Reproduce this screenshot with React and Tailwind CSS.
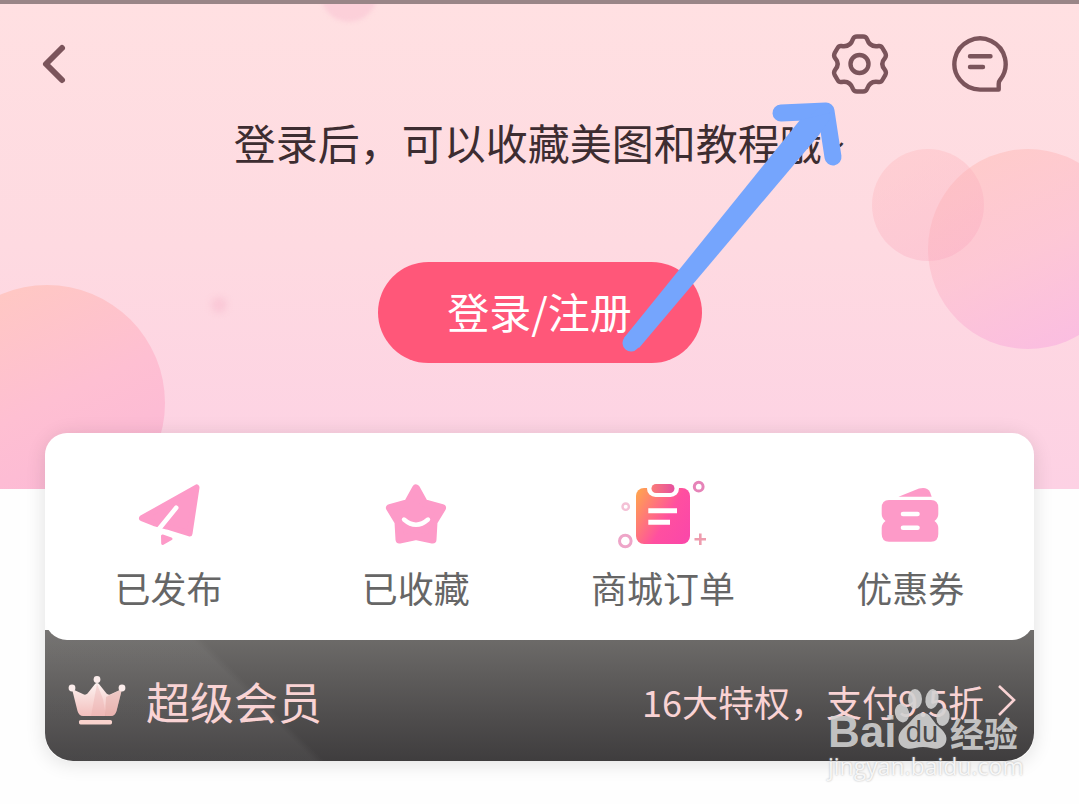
const BackIcon = () => (
  <svg className="w-[60px] h-[60px]" viewBox="0 0 60 60" fill="none" stroke="#7b545b" strokeWidth="6" strokeLinecap="round" strokeLinejoin="round">
    <path d="M38 14L22 30L38 46" />
  </svg>
);

const SettingsIcon = () => (
  <svg className="w-[60px] h-[60px]" viewBox="0 0 60 60" fill="none" stroke="#7b545b" strokeWidth="4.4" strokeLinejoin="round">
    <path d="M27 2.5H33Q36 2.5 37 5C39 11 43 13 48.5 12Q51 11.5 52.4 14L55.4 19.2Q56.6 21.5 55 24C51.4 28 51.4 32 55 36Q56.6 38.5 55.4 40.8L52.4 46Q51 48.5 48.5 48C43 47 39 49 37 55Q36 57.5 33 57.5H27Q24 57.5 23 55C21 49 17 47 11.5 48Q9 48.5 7.6 46L4.6 40.8Q3.4 38.5 5 36C8.6 32 8.6 28 5 24Q3.4 21.5 4.6 19.2L7.6 14Q9 11.5 11.5 12C17 13 21 11 23 5Q24 2.5 27 2.5Z" />
    <circle cx="29.5" cy="30" r="9" />
  </svg>
);

const MessageIcon = () => (
  <svg className="w-[60px] h-[60px]" viewBox="0 0 60 60" fill="none" stroke="#7b545b" strokeWidth="4.4" strokeLinecap="round" strokeLinejoin="round">
    <path d="M30 55.6A25.6 25.6 0 1 1 50 46Q48.7 47.5 48.7 50V55.6Z" />
    <path d="M20 22.3H40.5M20 33H33" />
  </svg>
);

const PlaneIcon = () => (
  <svg className="w-[72px] h-[72px]" viewBox="0 0 72 72">
    <g fill="#fd9ac8" stroke="#fd9ac8" strokeWidth="6" strokeLinejoin="round">
      <path d="M63.5 8.5L56.5 54.5L34 47.5L21 44L9 39.2Z" />
      <path d="M29.5 57L38 59.8L29.7 64.5Z" strokeWidth="3" />
    </g>
    <path d="M43.2 28.8L25.5 50.5" stroke="#fff" strokeWidth="4.6" strokeLinecap="round" />
  </svg>
);

const StarIcon = () => (
  <svg className="w-[72px] h-[72px]" viewBox="0 0 72 72">
    <path
      d="M36 9.5L44 24L62 29L53.5 43L52.5 60.5L36 57L19.5 60.5L18.5 43L10 29L28 24Z"
      fill="#fd9ac8"
      stroke="#fd9ac8"
      strokeWidth="8"
      strokeLinejoin="round"
    />
    <path d="M24 40.5Q36 51 48 40.5" fill="none" stroke="#fff" strokeWidth="4.4" strokeLinecap="round" />
  </svg>
);

const OrderIcon = () => (
  <svg className="w-24 h-[72px]" viewBox="0 0 96 72" fill="none">
    <defs>
      <linearGradient id="board" x1="0" y1="0.15" x2="1" y2="0.75">
        <stop offset="0" stopColor="#ffa052" />
        <stop offset="0.6" stopColor="#ff4fa0" />
        <stop offset="1" stopColor="#fb48a8" />
      </linearGradient>
      <linearGradient id="clip" x1="0" y1="0" x2="1" y2="0">
        <stop offset="0" stopColor="#fa7b78" />
        <stop offset="1" stopColor="#e54f9f" />
      </linearGradient>
    </defs>
    <rect x="21" y="9" width="54" height="56" rx="8" fill="url(#board)" />
    <rect x="32" y="1" width="32" height="17" rx="8.5" fill="#fff" />
    <rect x="36.5" y="5" width="23" height="9" rx="4.5" fill="url(#clip)" />
    <path d="M33.3 31.7H62M33.3 43.3H55" stroke="#fff" strokeWidth="5" />
    <circle cx="83.7" cy="7.7" r="4.4" stroke="#e683b8" strokeWidth="3" />
    <circle cx="10.7" cy="27.7" r="3.2" stroke="#f4c1d6" strokeWidth="2.4" />
    <circle cx="10.3" cy="62" r="5.8" stroke="#eea5c8" strokeWidth="3" />
    <path d="M85.3 54.5V66M79.5 60.3H91" stroke="#ee9cae" strokeWidth="2.6" />
  </svg>
);

const CouponIcon = () => (
  <svg className="w-[72px] h-[72px]" viewBox="0 0 72 72" fill="#fd9ac8">
    <path d="M24.5 17.7L45 9.6Q53 7.5 56 13L57.7 17.7Z" />
    <path d="M15 21H57Q64.3 21 64.3 29V35Q64.3 39 60.5 42Q64.3 45 64.3 49V55Q64.3 62.7 57 62.7H15Q7.7 62.7 7.7 55V49Q7.7 45 11.5 42Q7.7 39 7.7 35V29Q7.7 21 15 21Z" />
    <path d="M29 35H43.5M29 48.8H43.5" stroke="#fff" strokeWidth="4.6" strokeLinecap="round" />
  </svg>
);

const CrownIcon = () => (
  <svg className="w-[58px] h-[52px]" viewBox="0 0 58 52">
    <defs>
      <linearGradient id="crown" x1="0" y1="0" x2="0" y2="1">
        <stop offset="0" stopColor="#fdf3f1" />
        <stop offset="1" stopColor="#f3bfbd" />
      </linearGradient>
    </defs>
    <path d="M4 14L16 19.5Q18 20 19.5 18.5L27 9Q29 7 31 9L38.5 18.5Q40 20 42 19.5L54 14L48.5 36Q47 41 43 41H15Q11 41 9.5 36Z" fill="url(#crown)" />
    <path d="M29 9L23 41H38L35 24Z" fill="#e9aaa8" opacity="0.35" />
    <path d="M38 22L54 14L48.5 36Q47 41 43 41H37Z" fill="#dc9d99" opacity="0.4" />
    <g fill="#fbeceb">
      <circle cx="4" cy="13" r="3.4" />
      <circle cx="29" cy="4.5" r="3.4" />
      <circle cx="54" cy="13" r="3.4" />
      <rect x="11" y="45" width="33" height="4.4" rx="1.6" fill="#f9d3cd" />
    </g>
  </svg>
);

const menus = [
  { label: "已发布", Icon: PlaneIcon },
  { label: "已收藏", Icon: StarIcon },
  { label: "商城订单", Icon: OrderIcon },
  { label: "优惠券", Icon: CouponIcon },
];

const Watermark = () => (
  <div className="absolute right-3 top-[58px] w-[194px] pointer-events-none" aria-hidden="true">
    <div className="flex items-end h-[64px] text-[#d2d2d2]/90 font-bold leading-none">
      <span className="w-[66px] text-[44px] leading-[40px] font-['Liberation_Sans',sans-serif]">Bai</span>
      <div className="relative w-[56px] h-[64px]">
        <svg className="w-full h-full" viewBox="0 0 56 64" fill="currentColor">
          <ellipse cx="8" cy="25" rx="7" ry="9.5" transform="rotate(-12 8 25)" />
          <ellipse cx="21" cy="11" rx="7" ry="10" />
          <ellipse cx="38" cy="11" rx="6.5" ry="10" transform="rotate(10 38 11)" />
          <ellipse cx="49" cy="29" rx="6.5" ry="9" transform="rotate(10 49 29)" />
          <path d="M29 25C37 25 38 33 44 38C50 43 54 48 52 54C50 60 43 62 37 60Q29 58 21 60C14 62 7 60 5 54C3 47 7 42 13 37C19 32 21 25 29 25Z" />
        </svg>
        <span className="absolute inset-x-0 bottom-[5px] text-center text-[29px] leading-[29px] font-normal text-[#4b4a4b] font-['Liberation_Sans',sans-serif]">du</span>
      </div>
      <span className="text-[34px] leading-[38px] whitespace-nowrap">经验</span>
    </div>
    <div className="text-[23px] leading-[28px] text-white/85 font-['Open_Sans',sans-serif] [text-shadow:0_0_2px_#aaa]">
      jingyan.baidu.com
    </div>
  </div>
);

const App = () => {
  return (
    <main className="relative min-h-screen bg-[#fefefe] overflow-hidden font-['Noto_Sans_CJK_SC',sans-serif]">
      {/* Status bar edge */}
      <div className="h-1 bg-[#998587]"></div>

      {/* Hero */}
      <section className="relative overflow-hidden bg-gradient-to-b from-[#ffe0e2] via-[#fedae1] to-[#fdd1e4] pt-[30px] pb-[126px]">
        <div className="absolute -top-[38px] left-[321px] w-14 h-14 rounded-full bg-[#fac4d4]/60 blur-[2px]"></div>
        <div className="absolute top-[293px] left-[211px] w-4 h-4 rounded-full bg-[#f9c0d0]/60 blur-[3px]"></div>
        <div className="absolute top-[281px] -left-[71px] w-[236px] h-[236px] rounded-full bg-linear-[155deg] from-[#ffcabf] via-[#febfd2] to-[#fbb6d8]"></div>
        <div className="absolute top-[145px] -right-[49px] w-[200px] h-[200px] rounded-full bg-linear-[155deg] from-[#ffc8c2]/80 via-[#fdbfd0]/70 to-[#f9b4e4]/80"></div>
        <div className="absolute top-[145px] right-[95px] w-28 h-28 rounded-full bg-linear-[155deg] from-[#ffb8b8]/35 to-[#f9a4bf]/35"></div>

        <header className="relative flex items-center pl-6 pr-[69px]">
          <button aria-label="返回"><BackIcon /></button>
          <button aria-label="设置" className="ml-auto"><SettingsIcon /></button>
          <button aria-label="消息" className="ml-[60px]"><MessageIcon /></button>
        </header>

        <h1 className="relative mt-[18px] text-center text-[42px] leading-[60px] font-normal text-[#3d2d31]">
          登录后，可以收藏美图和教程哦~
        </h1>

        <div className="relative w-fit mx-auto mt-[90px]">
          <button className="w-[324px] h-[101px] pb-1 rounded-full bg-[#ff5779] text-white text-[42px] leading-[60px] font-normal">
            登录/注册
          </button>
          {/* Pointer to settings */}
          <svg className="absolute left-[242px] -top-[162px] w-[240px] h-[260px] pointer-events-none" viewBox="0 0 240 260" fill="none">
            <g stroke="#75a5fd" strokeWidth="17" strokeLinecap="round" strokeLinejoin="round">
              <path d="M161 13L206 11L213 57" />
              <path d="M11 243L202 16" />
            </g>
            <path d="M4 238L180 20L214 12L199 35L19 248Z" fill="#75a5fd" />
          </svg>
        </div>
      </section>

      {/* Shortcuts and membership */}
      <section className="relative mx-[45px] -mt-14 rounded-[26px] shadow-[0_2px_20px_rgba(0,0,0,0.12)]">
        <nav className="relative z-10 grid grid-cols-4 bg-white rounded-[22px] pt-[46px] pb-[30px]">
          {menus.map(({ label, Icon }) => (
            <button key={label} className="flex flex-col items-center gap-[13px]">
              <Icon />
              <span className="text-[36px] leading-[46px] font-normal text-[#666]">{label}</span>
            </button>
          ))}
        </nav>

        <div className="relative -mt-[10px] rounded-b-[28px] bg-gradient-to-b from-[#706e6c] to-[#3f3d3e]">
          <div className="absolute inset-0 rounded-b-[28px] bg-linear-[45deg] from-white/5 from-24% to-white/0 to-25%"></div>
          <a href="#vip" className="relative flex items-center pl-[23px] pr-[18px] pt-[41px] pb-[30px] text-[#f9d3d4]">
            <CrownIcon />
            <span className="ml-5 text-[44px] leading-[60px] font-normal">超级会员</span>
            <span className="ml-auto text-[36px] leading-[60px] font-normal">16大特权，支付9.5折</span>
            <svg className="ml-3 w-5 h-9" viewBox="0 0 20 36" fill="none" stroke="currentColor" strokeWidth="2.6">
              <path d="M3 3L18 17L3 32" />
            </svg>
          </a>
          <Watermark />
        </div>
      </section>
    </main>
  );
};

export default App;
